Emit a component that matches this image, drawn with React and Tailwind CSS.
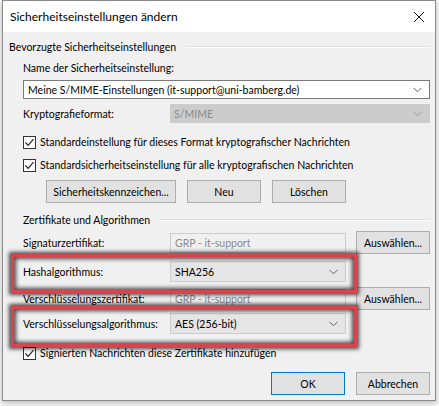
import React from 'react';

// Windows-style "Sicherheitseinstellungen ändern" dialog.

const Chevron = ({ color = '#606060' }) => (
  <svg width="9" height="6" viewBox="0 0 9 6" className="shrink-0">
    <polyline points="0.5,0.8 4.5,4.8 8.5,0.8" fill="none" stroke={color} strokeWidth="1" />
  </svg>
);

const Check = () => (
  <div className="w-[13px] h-[13px] border border-[#333] bg-white flex items-center justify-center shrink-0">
    <svg width="11" height="11" viewBox="0 0 11 11">
      <polyline points="1.5,5.5 4.2,8.3 9.5,2.2" fill="none" stroke="#222" strokeWidth="1.2" />
    </svg>
  </div>
);

const Btn = ({ children, w, primary }) => (
  <div
    className={`h-[23px] flex items-center justify-center bg-[#e1e1e1] border shrink-0 ${
      primary ? 'border-[#0078d7]' : 'border-[#adadad]'
    } ${w}`}
  >
    {children}
  </div>
);

const Heading = ({ children, className }) => (
  <div className={`flex items-center h-[16px] ${className}`}>
    <span className="shrink-0">{children}</span>
    <div className="flex-1 ml-[10px] h-[2px] border-t border-[#dcdcdc] border-b border-b-white" />
  </div>
);

const Label = ({ children }) => <div className="w-[147px] shrink-0">{children}</div>;

const Highlight = ({ top, height }) => (
  <div
    className="absolute left-[8px] w-[346px] border-[3px] border-[#d9454f] shadow-[0_0_4px_2px_rgba(0,0,0,0.7),inset_0_0_4px_2px_rgba(0,0,0,0.7)] pointer-events-none"
    style={{ top, height }}
  />
);

export default function App() {
  return (
    <div className="w-[439px] h-[406px] bg-[#f7f7f7] relative" style={{ fontFamily: 'Lato, "Noto Sans", sans-serif' }}>
      <div className="relative ml-[2px] w-[434px] h-[401px] border border-[#8a8a8a] bg-[#f0f0f0] text-[10.5px] leading-[16px] text-black shadow-[0_2px_6px_rgba(0,0,0,0.25)]">
        {/* Title bar */}
        <div className="h-[31px] bg-white flex items-center justify-between pl-[7px] pr-[10px]">
          <span className="text-[12px]">Sicherheitseinstellungen ändern</span>
          <svg width="12" height="12" viewBox="0 0 12 12">
            <path d="M1 1 L11 11 M11 1 L1 11" stroke="#111" strokeWidth="1" />
          </svg>
        </div>

        <div className="pl-[6px] pr-[5px]">
          <Heading className="mt-[7px]">Bevorzugte Sicherheitseinstellungen</Heading>

          <div className="pl-[14px]">
            <div className="mt-[5px]">Name der Sicherheitseinstellung:</div>
            <div className="mt-[4px] h-[19px] bg-white border border-[#7a7a7a] flex items-center justify-between pl-[4px] pr-[7px]">
              <span>Meine S/MIME-Einstellungen (it-support@uni-bamberg.de)</span>
              <Chevron />
            </div>

            <div className="mt-[5px] flex items-center h-[19px]">
              <Label>Kryptografieformat:</Label>
              <div className="flex-1 h-[19px] bg-[#cccccc] border border-[#cccccc] flex items-center justify-between pl-[3px] pr-[7px] text-[#8a8a8a]">
                <span>S/MIME</span>
                <Chevron color="#9a9a9a" />
              </div>
            </div>

            <div className="mt-[11px] flex items-center h-[16px] gap-[4px]">
              <Check />
              <span>Standardeinstellung für dieses Format kryptografischer Nachrichten</span>
            </div>
            <div className="mt-[7px] flex items-center h-[16px] gap-[4px]">
              <Check />
              <span>Standardsicherheitseinstellung für alle kryptografischen Nachrichten</span>
            </div>

            <div className="mt-[7px] flex pl-[23px] gap-[11px]">
              <Btn w="w-[130px]">Sicherheitskennzeichen...</Btn>
              <Btn w="w-[74px]">Neu</Btn>
              <Btn w="w-[74px]">Löschen</Btn>
            </div>

            <Heading className="mt-[9px]">Zertifikate und Algorithmen</Heading>

            <div className="mt-[3px] flex items-center h-[23px]">
              <Label>Signaturzertifikat:</Label>
              <div className="w-[176px] h-[20px] bg-[#f0f0f0] border border-[#cccccc] flex items-center pl-[4px] text-[#8a8a8a]">
                GRP - it-support
              </div>
              <div className="ml-[10px]">
                <Btn w="w-[74px]">Auswählen...</Btn>
              </div>
            </div>

            <div className="mt-[6px] flex items-center h-[23px]">
              <Label>Hashalgorithmus:</Label>
              <div className="w-[176px] h-[21px] bg-[#e5e5e5] border border-[#cccccc] flex items-center justify-between pl-[4px] pr-[7px]">
                <span>SHA256</span>
                <Chevron />
              </div>
            </div>

            <div className="mt-[4px] flex items-center h-[23px]">
              <Label>Verschlüsselungszertifikat:</Label>
              <div className="w-[176px] h-[20px] bg-[#f0f0f0] border border-[#cccccc] flex items-center pl-[4px] text-[#8a8a8a]">
                GRP - it-support
              </div>
              <div className="ml-[10px]">
                <Btn w="w-[74px]">Auswählen...</Btn>
              </div>
            </div>

            <div className="mt-[2px] flex items-center h-[23px]">
              <Label>Verschlüsselungsalgorithmus:</Label>
              <div className="w-[176px] h-[21px] bg-[#e5e5e5] border border-[#cccccc] flex items-center justify-between pl-[4px] pr-[7px]">
                <span>AES (256-bit)</span>
                <Chevron />
              </div>
            </div>

            <div className="mt-[10px] flex items-center h-[16px] gap-[4px]">
              <Check />
              <span>Signierten Nachrichten diese Zertifikate hinzufügen</span>
            </div>

            <div className="mt-[11px] flex justify-end gap-[11px]">
              <Btn w="w-[74px]" primary>OK</Btn>
              <Btn w="w-[74px]">Abbrechen</Btn>
            </div>
          </div>
        </div>

        <Highlight top={253} height={39} />
        <Highlight top={305} height={41} />
      </div>
    </div>
  );
}
